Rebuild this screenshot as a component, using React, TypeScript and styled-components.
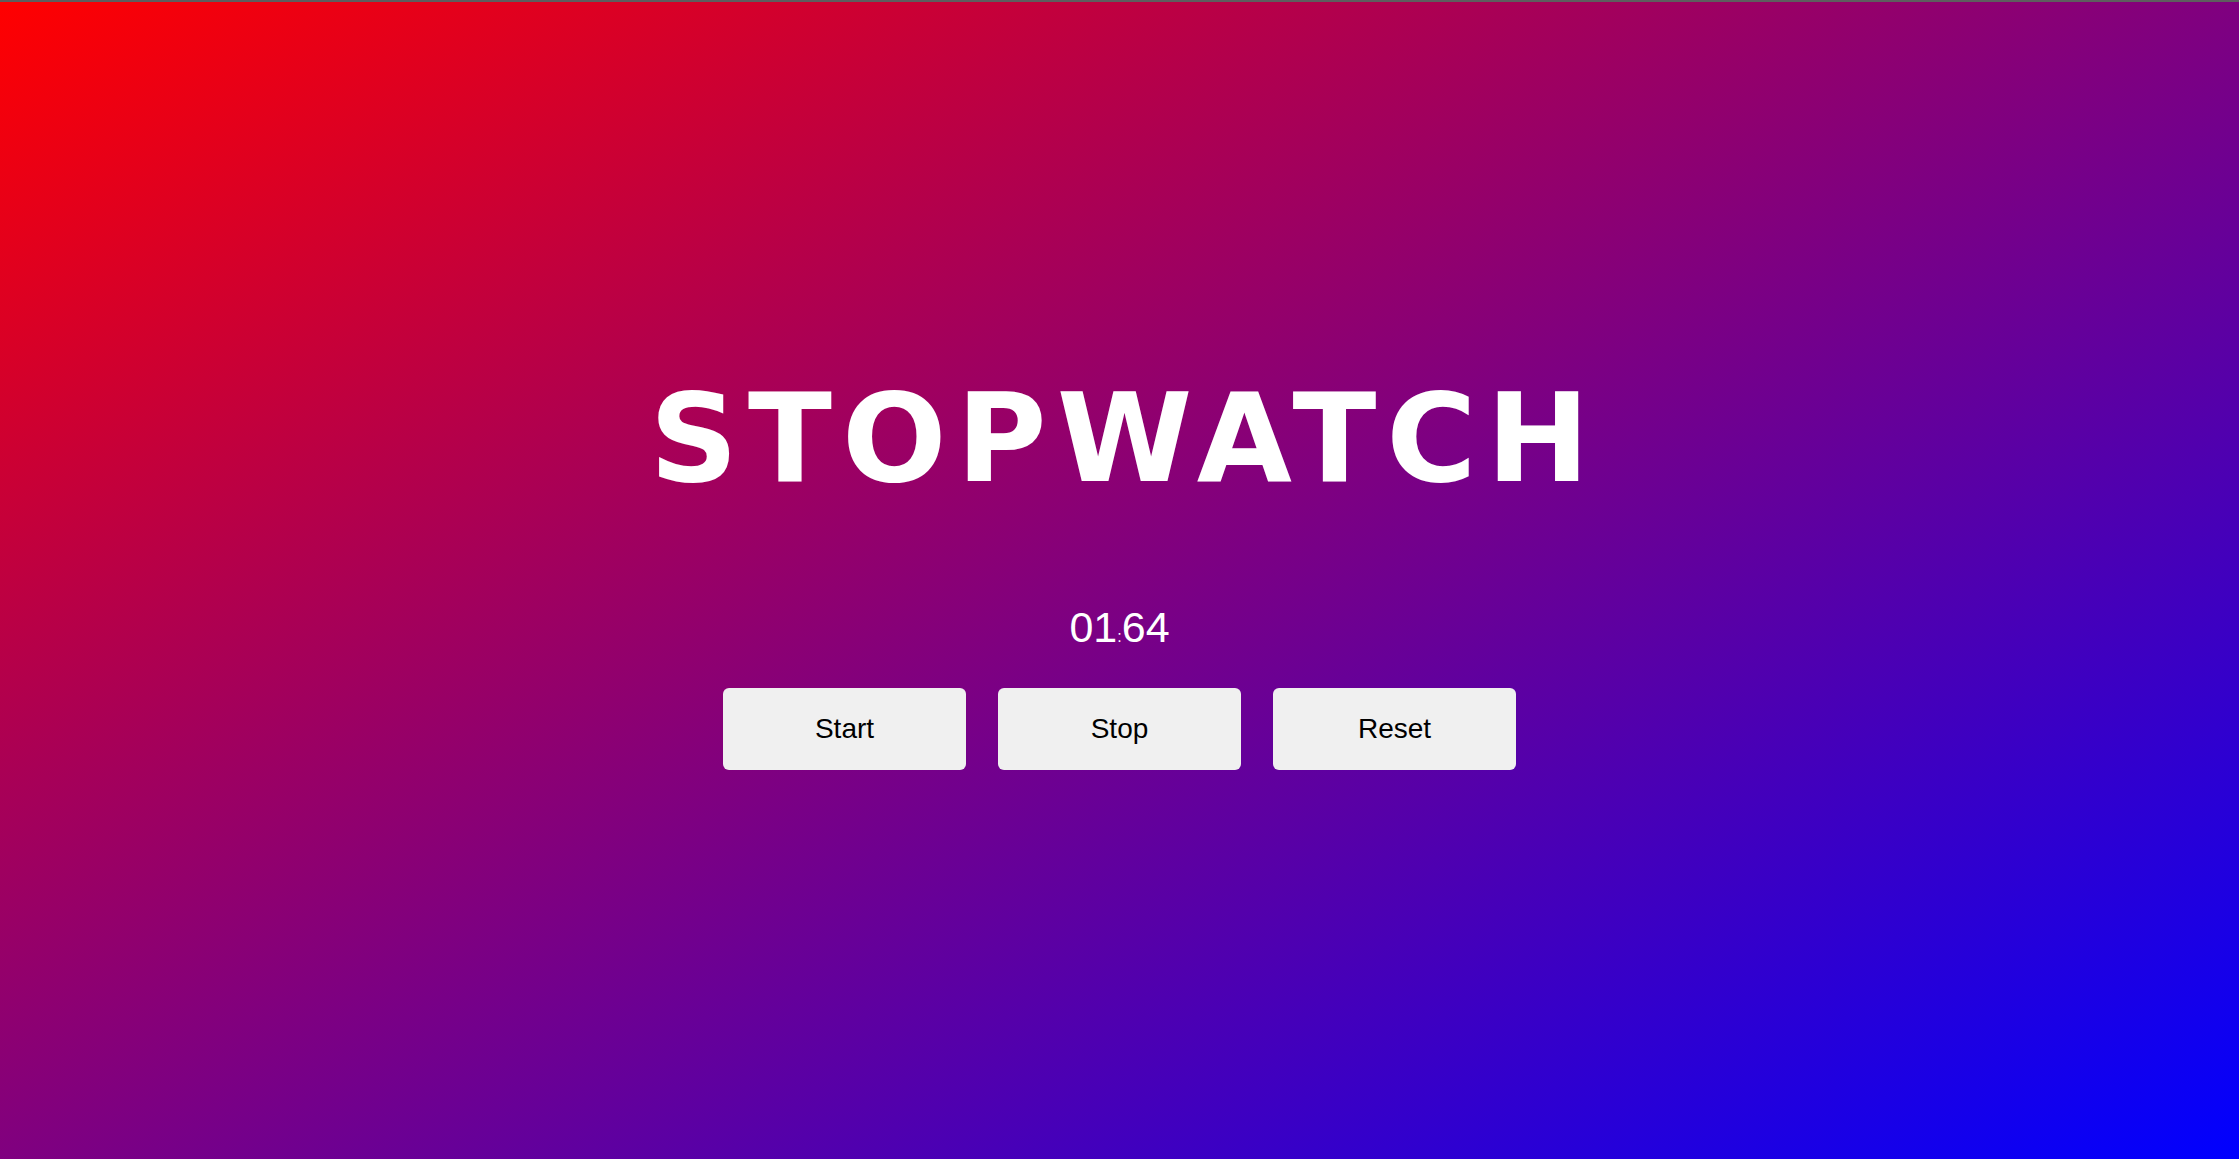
import React, {useState, useRef, useEffect} from 'react';
import styled, {createGlobalStyle} from 'styled-components';

const GlobalStyle = createGlobalStyle`
    html, body {
        margin: 0;
        padding: 0;
    }
    body {
        font-family: "Liberation Sans", Arial, sans-serif;
    }
    * {
        box-sizing: border-box;
    }
`;

const Page = styled.main`
    min-height: 100vh;
    border-top: 2px solid #5e5e5e;
    background: linear-gradient(to bottom right, #ff0000, #0000ff);
    display: flex;
    flex-direction: column;
    align-items: center;
    justify-content: center;
    padding-bottom: 16px;
`;

const Title = styled.h1`
    margin: 0;
    padding-top: 2px;
    color: white;
    font-family: "DejaVu Sans", "Liberation Sans", sans-serif;
    font-weight: 700;
    font-size: 123px;
    line-height: 1;
    letter-spacing: 10px;
    padding-left: 10px;
`;

const Display = styled.div`
    margin-top: 106px;
    color: white;
    font-size: 43px;
    line-height: 1;
`;

const Colon = styled.span`
    font-size: 16px;
`;

const ButtonRow = styled.div`
    margin-top: 39px;
    display: flex;
    gap: 32px;
`;

const ControlButton = styled.button`
    width: 243px;
    height: 82px;
    border: none;
    border-radius: 6px;
    background: #f0f0f0;
    color: #000;
    font-family: "Liberation Sans", Arial, sans-serif;
    font-size: 28px;
    cursor: pointer;
`;

const pad = (n: number) => n.toString().padStart(2, '0');

export default function App() {
    // ticks are hundredths of a second; 164 gives the "01:64" in the screenshot
    const [ticks, setTicks] = useState(164);
    const timer = useRef<number | null>(null);

    const start = () => {
        if (timer.current !== null) return;
        timer.current = window.setInterval(() => setTicks(t => t + 1), 10);
    };

    const stop = () => {
        if (timer.current === null) return;
        window.clearInterval(timer.current);
        timer.current = null;
    };

    const reset = () => {
        stop();
        setTicks(0);
    };

    useEffect(() => stop, []);

    const seconds = Math.floor(ticks / 100);
    const hundredths = ticks % 100;

    return (
        <Page>
            <GlobalStyle/>
            <Title>STOPWATCH</Title>
            <Display>
                {pad(seconds)}<Colon>:</Colon>{pad(hundredths)}
            </Display>
            <ButtonRow>
                <ControlButton onClick={start}>Start</ControlButton>
                <ControlButton onClick={stop}>Stop</ControlButton>
                <ControlButton onClick={reset}>Reset</ControlButton>
            </ButtonRow>
        </Page>
    );
}
